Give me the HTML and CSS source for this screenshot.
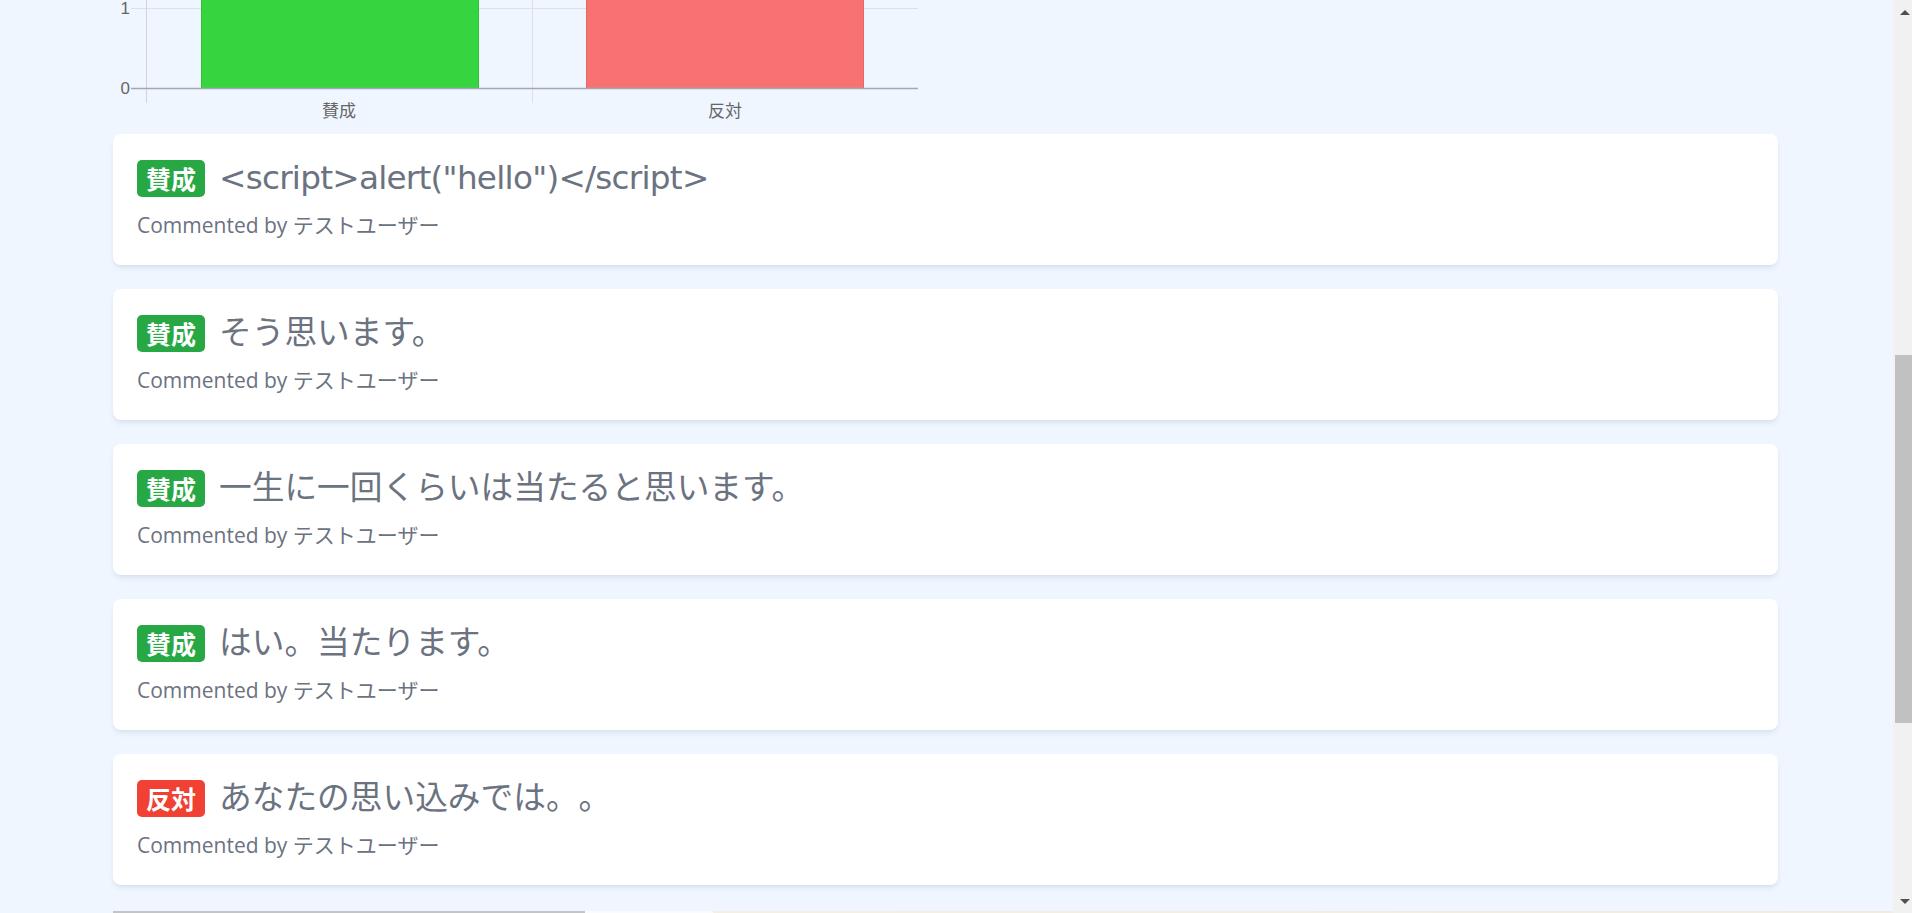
FILE: index.html
```html
<!DOCTYPE html>
<html lang="ja">
<head>
<meta charset="utf-8">
<title>Comments</title>
<link rel="stylesheet" href="styles.css">
</head>
<body>
<div class="screen">
  <main class="page">
    <div class="content">
      <div class="chart">
        <svg width="820" height="122" viewBox="0 0 820 122" xmlns="http://www.w3.org/2000/svg">
          <line x1="18" y1="8.5" x2="805" y2="8.5" stroke="#dce1e9" stroke-width="1"/>
          <line x1="33.5" y1="0" x2="33.5" y2="103" stroke="#cfd4dc" stroke-width="1"/>
          <line x1="419.5" y1="0" x2="419.5" y2="103" stroke="#dce1e9" stroke-width="1"/>
          <rect x="88.5" y="-4" width="277" height="92.5" fill="#36d43e" stroke="#2fc437" stroke-width="1"/>
          <rect x="473.5" y="-4" width="277" height="92.5" fill="#f87272" stroke="#e56767" stroke-width="1"/>
          <line x1="18" y1="88.5" x2="805" y2="88.5" stroke="#a3a8b0" stroke-width="1.5"/>
          <text class="axis-label" x="17" y="14" text-anchor="end">1</text>
          <text class="axis-label" x="17" y="94" text-anchor="end">0</text>
          <text class="axis-label" x="226" y="117" text-anchor="middle">賛成</text>
          <text class="axis-label" x="612" y="117" text-anchor="middle">反対</text>
        </svg>
      </div>
      <ul class="comments">
        <li class="card">
          <div class="card-title"><span class="badge agree">賛成</span><span class="card-text code">&lt;script&gt;alert("hello")&lt;/script&gt;</span></div>
          <p class="by">Commented by テストユーザー</p>
        </li>
        <li class="card">
          <div class="card-title"><span class="badge agree">賛成</span><span class="card-text">そう思います。</span></div>
          <p class="by">Commented by テストユーザー</p>
        </li>
        <li class="card">
          <div class="card-title"><span class="badge agree">賛成</span><span class="card-text">一生に一回くらいは当たると思います。</span></div>
          <p class="by">Commented by テストユーザー</p>
        </li>
        <li class="card">
          <div class="card-title"><span class="badge agree">賛成</span><span class="card-text">はい。当たります。</span></div>
          <p class="by">Commented by テストユーザー</p>
        </li>
        <li class="card">
          <div class="card-title"><span class="badge oppose">反対</span><span class="card-text">あなたの思い込みでは。。</span></div>
          <p class="by">Commented by テストユーザー</p>
        </li>
      </ul>
      <div class="next-block"></div>
    </div>
  </main>
  <div class="scrollbar">
    <span class="arrow up"></span>
    <div class="track"><div class="thumb"></div></div>
    <span class="arrow down"></span>
  </div>
</div>
</body>
</html>
```

FILE: styles.css
```css
* { box-sizing: border-box; }
html, body {
  margin: 0;
  padding: 0;
  height: 913px;
  overflow: hidden;
  background: #eff6ff;
}
.screen {
  display: flex;
  height: 913px;
}
.page {
  flex: 1;
  min-width: 0;
  overflow: hidden;
}
.content {
  padding-left: 113px;
  width: 1778px;
}
.chart {
  height: 134px;
}
.chart svg { display: block; }
.axis-label {
  font-family: "Liberation Sans", "Noto Sans CJK JP", sans-serif;
  font-size: 17px;
  fill: #666;
}
.comments {
  list-style: none;
  margin: 0;
  padding: 0;
  display: flex;
  flex-direction: column;
  gap: 24px;
}
.card {
  background: #fff;
  border-radius: 8px;
  box-shadow: 0 4px 6px -1px rgba(30, 50, 100, 0.08), 0 2px 4px -2px rgba(30, 50, 100, 0.08);
  padding: 24px 24px 26px;
  height: 131px;
}
.card-title {
  display: flex;
  align-items: center;
  height: 40px;
}
.badge {
  display: inline-flex;
  align-items: center;
  justify-content: center;
  height: 37px;
  padding: 0 9px;
  border-radius: 5px;
  color: #fff;
  font-family: "Noto Sans CJK JP", sans-serif;
  font-weight: 700;
  font-size: 25px;
  margin-right: 14px;
  flex: none;
}
.badge.agree { background: #28a745; }
.badge.oppose { background: #f04134; }
.card-text {
  font-family: "DejaVu Sans", "Noto Sans CJK JP", sans-serif;
  font-size: 32.7px;
  line-height: 40px;
  color: #6b7280;
  white-space: nowrap;
  text-spacing-trim: space-all;
}
.card-text.code {
  letter-spacing: -0.75px;
}
.by {
  margin: 13px 0 0;
  font-family: "Open Sans", "Noto Sans CJK JP", sans-serif;
  font-size: 21px;
  line-height: 28px;
  color: #6b7280;
  text-spacing-trim: space-all;
}
.next-block {
  margin-top: 26px;
  height: 2px;
  width: 1780px;
  background: linear-gradient(to right, #c4c4c4 0, #c4c4c4 472px, #fbfbfb 472px, #fbfbfb 600px, #f6eee2 600px, #f3ebdf 100%);
}
.scrollbar {
  width: 19px;
  flex: none;
  background: #f1f1f1;
  display: flex;
  flex-direction: column;
  align-items: stretch;
}
.arrow {
  display: block;
  height: 17px;
  flex: none;
  position: relative;
}
.arrow::after {
  content: "";
  position: absolute;
  left: 7px;
  width: 0;
  height: 0;
  border-left: 5px solid transparent;
  border-right: 5px solid transparent;
}
.arrow.up::after {
  top: 10px;
  border-bottom: 5px solid #505050;
}
.arrow.down::after {
  top: 3px;
  border-top: 5px solid #505050;
}
.track {
  flex: 1;
  padding-left: 2px;
}
.thumb {
  margin-top: 338px;
  height: 368px;
  background: #c1c1c1;
}
```
